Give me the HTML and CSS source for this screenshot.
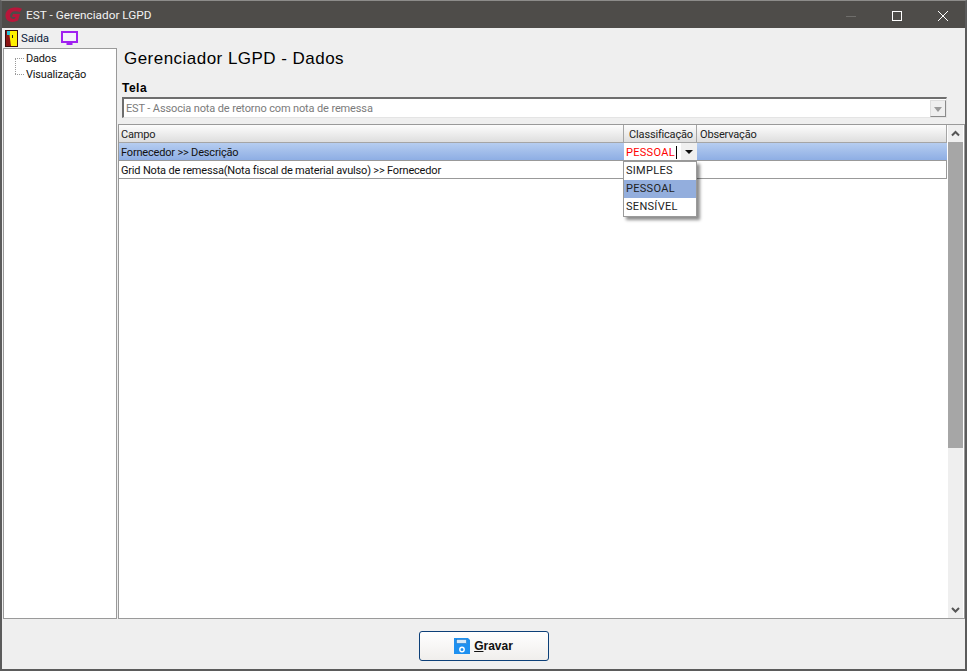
FILE: index.html
```html
<!DOCTYPE html>
<html lang="pt-BR">
<head>
    <meta charset="UTF-8">
    <meta name="viewport" content="width=device-width, initial-scale=1.0">
    <title>EST - Gerenciador LGPD</title>
    <link rel="stylesheet" href="styles.css">
</head>
<body>

<div class="window">
    <div class="titlebar">
        <svg class="app-logo" width="18" height="16" viewBox="0 0 18 16">
            <path d="M17 1.8 C13 0 7 0 3.5 2.5 C0 5 -0.5 10 2 13 C4.5 15.5 9.5 15.5 13 13.5 L15 7 L8 7 L7 10 L10.5 10 L10 11.5 C8.5 12.2 6.5 12 5.5 10.5 C4.5 8.5 5.5 5.5 8 4.5 C10.5 3.8 13 4.2 15 5 Z" fill="#b8163a"/>
        </svg>
        <span class="title-text">EST - Gerenciador LGPD</span>
        <div class="window-buttons">
            <svg width="46" height="27" viewBox="0 0 46 27"><path d="M18 15.5 H28" stroke="#6f6e6b" fill="none"/></svg>
            <svg width="46" height="27" viewBox="0 0 46 27"><rect x="18.5" y="10.5" width="9" height="9" stroke="#fff" fill="none"/></svg>
            <svg width="46" height="27" viewBox="0 0 46 27"><path d="M18 10 L28 20 M28 10 L18 20" stroke="#fff" fill="none"/></svg>
        </div>
    </div>

    <div class="toolbar">
        <svg class="door-icon" width="13" height="17" viewBox="0 0 13 17">
            <rect width="13" height="17" fill="#3a0d0d"/>
            <path d="M1 1 H12 V16 H1 Z" fill="#8c1414"/>
            <path d="M4 1 H12 V16 H6 L5 9 Z" fill="#ffef00"/>
            <rect x="2" y="1" width="3" height="4" fill="#28c4d8"/>
            <rect x="7" y="5" width="1" height="3" fill="#222"/>
        </svg>
        <span class="toolbar-label">Saída</span>
        <svg class="monitor-icon" width="17" height="15" viewBox="0 0 17 15">
            <rect x="1" y="1" width="15" height="10" fill="#f4f0fa" stroke="#a020f0" stroke-width="2"/>
            <rect x="5.5" y="12" width="6" height="2" fill="#a020f0"/>
        </svg>
    </div>

    <div class="main">
        <div class="tree">
            <div class="tree-item tree-first">Dados</div>
            <div class="tree-item">Visualização</div>
        </div>

        <div class="content">
            <h1 class="page-title">Gerenciador LGPD - Dados</h1>
            <label class="field-label">Tela</label>
            <div class="combo">
                <span class="combo-text">EST - Associa nota de retorno com nota de remessa</span>
                <span class="combo-button"></span>
            </div>

            <div class="grid-box">
                <div class="grid">
                    <div class="grid-row grid-head">
                        <div class="cell col-campo">Campo</div>
                        <div class="cell col-class head-center">Classificação</div>
                        <div class="cell col-obs">Observação</div>
                    </div>
                    <div class="grid-row row-selected">
                        <div class="cell col-campo">Fornecedor &gt;&gt; Descrição</div>
                        <div class="cell col-class editor">
                            <span class="editor-text"><span class="editor-value">PESSOAL</span></span>
                            <span class="editor-button"></span>
                        </div>
                        <div class="cell col-obs"></div>
                    </div>
                    <div class="grid-row row-plain">
                        <div class="cell col-campo">Grid Nota de remessa(Nota fiscal de material avulso) &gt;&gt; Fornecedor</div>
                        <div class="cell col-class"></div>
                        <div class="cell col-obs"></div>
                    </div>
                    <div class="dropdown">
                        <div class="drop-item">SIMPLES</div>
                        <div class="drop-item drop-active">PESSOAL</div>
                        <div class="drop-item">SENSÍVEL</div>
                    </div>
                </div>
                <div class="scrollbar">
                    <svg width="15" height="17" viewBox="0 0 15 17"><path d="M4 10.5 L7.5 7 L11 10.5" stroke="#555" stroke-width="2" fill="none"/></svg>
                    <div class="scroll-thumb"></div>
                    <div class="scroll-track"></div>
                    <svg width="15" height="17" viewBox="0 0 15 17"><path d="M4 7 L7.5 10.5 L11 7" stroke="#555" stroke-width="2" fill="none"/></svg>
                </div>
            </div>
        </div>
    </div>

    <div class="footer">
        <button class="save-button">
            <svg width="16" height="16" viewBox="0 0 16 16">
                <path d="M0 0 H14 L16 2 V16 H0 Z" fill="#1e90f0"/>
                <rect x="2.5" y="1.5" width="10" height="4" fill="#d5e8f8" stroke="#0e6cc0" stroke-width="0.5"/>
                <circle cx="8" cy="11.5" r="2.2" fill="#1e90f0" stroke="#fff" stroke-width="1.4"/>
            </svg>
            <span class="save-text"><u>G</u>ravar</span>
        </button>
    </div>
</div>

</body>
</html>
```

FILE: styles.css
```css
html, body {
    margin: 0;
    padding: 0;
}

body {
    font-family: Roboto, 'Liberation Sans', Arial, sans-serif;
    font-size: 11px;
    letter-spacing: -0.18px;
    color: #111;
    background-color: #efefef;
}

.window {
    width: 967px;
    height: 671px;
    box-sizing: border-box;
    border: 2px solid #5b5b5b;
    border-top: 1px solid #8d8c8a;
    display: flex;
    flex-direction: column;
    background-color: #efefef;
}

.titlebar {
    height: 27px;
    flex: none;
    display: flex;
    align-items: center;
    background-color: #4e4c49;
    color: #f2f2f2;
    padding-left: 3px;
}

.app-logo {
    margin-right: 3px;
}

.title-text {
    font-size: 11.8px;
    letter-spacing: 0;
}

.window-buttons {
    margin-left: auto;
    margin-right: -1px;
    display: flex;
}

.toolbar {
    height: 20px;
    flex: none;
    display: flex;
    align-items: center;
    padding-left: 3px;
}

.toolbar-label {
    margin-left: 3px;
    font-size: 11.5px;
    color: #0c1a3a;
}

.monitor-icon {
    margin-left: 12px;
}

.main {
    flex: 1;
    min-height: 0;
    display: flex;
    padding-left: 1px;
}

.tree {
    width: 114px;
    box-sizing: border-box;
    background-color: #fff;
    border: 1px solid #9a9a9a;
    padding-top: 2px;
    margin-right: 1px;
}

.tree-item {
    height: 16px;
    line-height: 15px;
    padding-left: 22px;
    position: relative;
}

.tree-item::before {
    content: "";
    position: absolute;
    left: 11px;
    top: 7px;
    width: 9px;
    border-top: 1px dotted #999;
}

.tree-first::after {
    content: "";
    position: absolute;
    left: 11px;
    top: 7px;
    height: 16px;
    border-left: 1px dotted #999;
}

.content {
    flex: 1;
    min-width: 0;
    display: flex;
    flex-direction: column;
}

.page-title {
    margin: 0;
    padding: 1px 0 0 6px;
    height: 30px;
    box-sizing: border-box;
    font-family: 'Liberation Sans', Arial, sans-serif;
    font-size: 17px;
    font-weight: normal;
    letter-spacing: 0.47px;
    line-height: 20px;
    color: #000;
}

.field-label {
    display: block;
    padding-left: 4px;
    height: 19px;
    line-height: 20px;
    font-family: 'Liberation Sans', Arial, sans-serif;
    font-size: 12px;
    letter-spacing: 0.5px;
    font-weight: bold;
    color: #000;
}

.combo {
    margin-left: 4px;
    width: 825px;
    height: 21px;
    box-sizing: border-box;
    background-color: #fff;
    border-top: 2px solid #6e6e6e;
    border-left: 2px solid #6e6e6e;
    border-right: 1px solid #e4e4e4;
    border-bottom: 1px solid #e4e4e4;
    display: flex;
    align-items: center;
    justify-content: space-between;
}

.combo-text {
    color: #7b7b7b;
    padding-left: 2px;
    letter-spacing: -0.13px;
}

.combo-button {
    width: 16px;
    height: 17px;
    box-sizing: border-box;
    background-color: #efefef;
    border: 1px solid #8a8a8a;
    border-top-color: #ddd;
    border-left-color: #ddd;
    position: relative;
}

.combo-button::after {
    content: "";
    position: absolute;
    left: 3px;
    top: 6px;
    border: 4px solid transparent;
    border-top: 5px solid #9a9a9a;
    border-bottom: 0;
}

.grid-box {
    margin-top: 6px;
    flex: 1;
    min-height: 0;
    display: flex;
    background-color: #fff;
    border: 1px solid #9a9a9a;
}

.grid {
    flex: 1;
    min-width: 0;
    position: relative;
}

.grid-row {
    height: 18px;
    display: flex;
    margin-right: 1px;
}

.cell {
    box-sizing: border-box;
    line-height: 17px;
    padding: 1px 0 0 2px;
    white-space: nowrap;
    overflow: hidden;
}

.col-campo {
    width: 505px;
}

.col-class {
    width: 73px;
}

.col-obs {
    flex: 1;
    padding-left: 3px;
}

.grid-head .cell {
    background: linear-gradient(#fdfdfd, #dedede);
    border-right: 1px solid #a5a5a5;
    border-bottom: 1px solid #a5a5a5;
    color: #222;
}

.head-center {
    text-align: center;
}

.row-selected {
    background: linear-gradient(#b6cdf0, #8eaee4);
    border-bottom: 1px solid #999;
    height: 17px;
}

.row-plain {
    border-bottom: 1px solid #999;
    border-right: 1px solid #999;
    height: 17px;
}

.editor {
    background-color: #fff;
    display: flex;
    padding: 1px 0 0 2px;
}

.editor-text {
    color: #f00;
    width: 54px;
    letter-spacing: 0.3px;
}

.editor-value {
    border-right: 1px solid #000;
    padding-right: 1px;
}

.editor-button {
    width: 16px;
    margin: -1px 0 0 auto;
    background-color: #efefef;
    position: relative;
}

.editor-button::after {
    content: "";
    position: absolute;
    left: 4px;
    top: 7px;
    border: 4px solid transparent;
    border-top: 4px solid #111;
    border-bottom: 0;
}

.dropdown {
    position: absolute;
    left: 504px;
    top: 36px;
    width: 74px;
    box-sizing: border-box;
    background-color: #fff;
    border: 1px solid #9a9a9a;
    box-shadow: 3px 3px 3px rgba(0, 0, 0, 0.45);
}

.drop-item {
    height: 18px;
    line-height: 17px;
    padding-left: 2px;
    letter-spacing: 0.3px;
    color: #222;
}

.drop-active {
    background-color: #93aedd;
}

.scrollbar {
    width: 15px;
    flex: none;
    margin-right: 1px;
    display: flex;
    flex-direction: column;
    background-color: #efefef;
}

.scrollbar svg {
    flex: none;
}

.scroll-thumb {
    height: 306px;
    background-color: #a6a6a6;
}

.scroll-track {
    flex: 1;
}

.footer {
    height: 50px;
    flex: none;
    display: flex;
    align-items: flex-start;
    justify-content: center;
    padding-top: 12px;
    box-sizing: border-box;
}

.save-button {
    width: 130px;
    height: 30px;
    display: flex;
    align-items: center;
    justify-content: center;
    padding: 0;
    background: linear-gradient(#fff, #f0eeec);
    border: 1px solid #0c3f78;
    border-radius: 3px;
    font-family: 'Liberation Sans', Arial, sans-serif;
    font-size: 12px;
    font-weight: bold;
    color: #111;
}

.save-text {
    margin-left: 4px;
}
```
